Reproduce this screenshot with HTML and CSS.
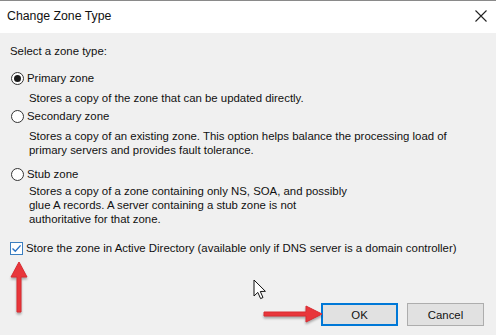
FILE: index.html
```html
<!DOCTYPE html>
<html lang="en">
<head>
    <meta charset="UTF-8">
    <meta name="viewport" content="width=device-width, initial-scale=1.0">
    <title>Change Zone Type</title>
    <link rel="stylesheet" href="styles.css">
</head>
<body>
<div class="dialog">
    <div class="titlebar">
        <span class="title">Change Zone Type</span>
        <svg class="close" width="12" height="12" viewBox="0 0 12 12">
            <path d="M0.5 0.5 L11.5 11.5 M11.5 0.5 L0.5 11.5" stroke="#222" stroke-width="1.1" fill="none"/>
        </svg>
    </div>
    <div class="content">
        <p class="prompt">Select a zone type:</p>

        <div class="option">
            <div class="choice"><span class="radio checked"></span>Primary zone</div>
            <p class="desc">Stores a copy of the zone that can be updated directly.</p>
        </div>
        <div class="option">
            <div class="choice"><span class="radio"></span>Secondary zone</div>
            <p class="desc">Stores a copy of an existing zone. This option helps balance the processing load of<br>primary servers and provides fault tolerance.</p>
        </div>
        <div class="option stub">
            <div class="choice"><span class="radio"></span>Stub zone</div>
            <p class="desc">Stores a copy of a zone containing only NS, SOA, and possibly<br>glue A records. A server containing a stub zone is not<br>authoritative for that zone.</p>
        </div>

        <div class="choice store">
            <span class="checkbox">
                <svg width="11" height="11" viewBox="0 0 11 11">
                    <path d="M1.5 5.5 L4.3 8.3 L9.6 2.4" stroke="#2b73c4" stroke-width="1.4" fill="none"/>
                </svg>
            </span>
            Store the zone in Active Directory (available only if DNS server is a domain controller)
        </div>

        <div class="buttons">
            <button class="btn default">OK</button>
            <button class="btn">Cancel</button>
        </div>
    </div>

    <!-- annotations drawn over the screenshot -->
    <svg class="arrow-up" width="24" height="56" viewBox="0 0 24 56">
        <path d="M12 2 L20 17 L14 17 L14 52 L10 52 L10 17 L4 17 Z" fill="#e8363b" stroke="#d92b31" stroke-width="1" stroke-linejoin="round"/>
    </svg>
    <svg class="arrow-right" width="64" height="22" viewBox="0 0 64 22">
        <path d="M2 9 L44 9 L44 3 L60 11 L44 19 L44 13 L2 13 Z" fill="#e8363b" stroke="#d92b31" stroke-width="1" stroke-linejoin="round"/>
    </svg>
    <svg class="cursor" width="14" height="22" viewBox="0 0 14 22">
        <path d="M1 1 L1 17 L4.8 13.4 L7.6 19.6 L10 18.5 L7.3 12.5 L12.4 12.3 Z" fill="#fff" stroke="#111" stroke-width="1" stroke-linejoin="round"/>
    </svg>
</div>
</body>
</html>
```

FILE: styles.css
```css
*{
    margin: 0;
    padding: 0;
    box-sizing: border-box;
}
body{
    margin: 0;
    background: #f0f0f0;
    font-family: "Liberation Sans", Arial, sans-serif;
    font-size: 11.4px;
    color: #111;
}
.dialog{
    position: relative;
    width: 496px;
    height: 335px;
    overflow: hidden;
    background: #f0f0f0;
}
.titlebar{
    height: 33px;
    background: #fff;
    border-top: 1px solid #8a8a8a;
    display: flex;
    align-items: center;
    justify-content: space-between;
    padding: 0 9px 2px 7px;
}
.title{
    font-size: 12.3px;
}
.content{
    padding: 11px 10px 0 10px;
    display: flex;
    flex-direction: column;
}
.prompt{
    line-height: 15px;
}
.option{
    margin-top: 12px;
}
.option + .option{
    margin-top: 4px;
}
.option.stub{
    margin-top: 10px;
}
.choice{
    display: flex;
    align-items: center;
    gap: 3px;
    line-height: 15px;
}
.radio{
    position: relative;
    width: 13px;
    height: 13px;
    border: 1px solid #333;
    border-radius: 50%;
    background: #fff;
    margin-left: 1px;
}
.radio.checked::after{
    content: "";
    position: absolute;
    left: 2px;
    top: 2px;
    width: 7px;
    height: 7px;
    border-radius: 50%;
    background: #1a1a1a;
}
.desc{
    margin: 5px 0 0 19px;
    line-height: 14px;
}
.stub .desc{
    margin-top: 2px;
}
.store{
    margin-top: 15px;
}
.checkbox{
    width: 13px;
    height: 13px;
    border: 1px solid #3c7fc0;
    background: #fff;
    display: flex;
    align-items: center;
    justify-content: center;
}
.buttons{
    display: flex;
    justify-content: flex-end;
    gap: 9px;
    margin-top: 47px;
    padding-right: 2px;
}
.btn{
    width: 77px;
    height: 23px;
    background: #e1e1e1;
    border: 1px solid #adadad;
    font-family: inherit;
    font-size: 11.4px;
    color: #111;
}
.btn.default{
    border: 2px solid #0078d7;
}
.arrow-up{
    position: absolute;
    left: 7px;
    top: 260px;
    filter: drop-shadow(0 2px 1px rgba(0,0,0,0.3));
}
.arrow-right{
    position: absolute;
    left: 262px;
    top: 303px;
    filter: drop-shadow(0 2px 1px rgba(0,0,0,0.3));
}
.cursor{
    position: absolute;
    left: 253px;
    top: 279px;
}
```
